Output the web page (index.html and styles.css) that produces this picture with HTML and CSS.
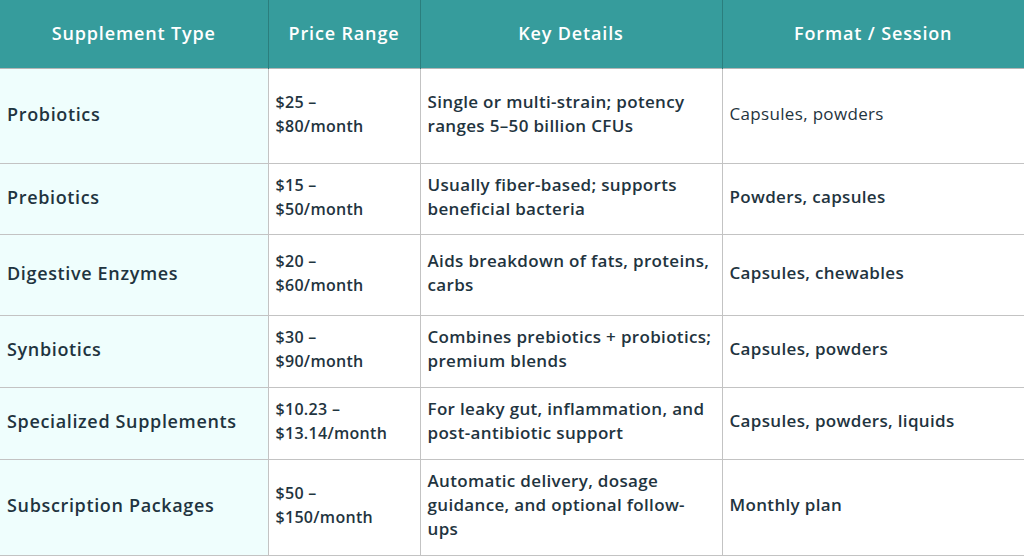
FILE: index.html
```html
<!DOCTYPE html>
<html>
<head>
<meta charset="utf-8">
<link rel="stylesheet" href="styles.css">
</head>
<body>
<table class="grid">
  <colgroup>
    <col class="c1"><col class="c2"><col class="c3"><col class="c4">
  </colgroup>
  <thead>
    <tr class="head">
      <th>Supplement Type</th>
      <th>Price Range</th>
      <th>Key Details</th>
      <th>Format / Session</th>
    </tr>
  </thead>
  <tbody>
    <tr class="r1">
      <td class="type">Probiotics</td>
      <td class="price">$25 –<br>$80/month</td>
      <td class="detail">Single or multi-strain; potency ranges 5–50 billion CFUs</td>
      <td class="detail light">Capsules, powders</td>
    </tr>
    <tr class="r2">
      <td class="type">Prebiotics</td>
      <td class="price">$15 –<br>$50/month</td>
      <td class="detail">Usually fiber-based; supports beneficial bacteria</td>
      <td class="detail">Powders, capsules</td>
    </tr>
    <tr class="r3">
      <td class="type">Digestive Enzymes</td>
      <td class="price">$20 –<br>$60/month</td>
      <td class="detail">Aids breakdown of fats, proteins, carbs</td>
      <td class="detail">Capsules, chewables</td>
    </tr>
    <tr class="r4">
      <td class="type">Synbiotics</td>
      <td class="price">$30 –<br>$90/month</td>
      <td class="detail">Combines prebiotics + probiotics; premium blends</td>
      <td class="detail">Capsules, powders</td>
    </tr>
    <tr class="r5">
      <td class="type">Specialized Supplements</td>
      <td class="price">$10.23 –<br>$13.14/month</td>
      <td class="detail">For leaky gut, inflammation, and post-antibiotic support</td>
      <td class="detail">Capsules, powders, liquids</td>
    </tr>
    <tr class="r6">
      <td class="type">Subscription Packages</td>
      <td class="price">$50 –<br>$150/month</td>
      <td class="detail">Automatic delivery, dosage guidance, and optional follow-ups</td>
      <td class="detail">Monthly plan</td>
    </tr>
  </tbody>
</table>
</body>
</html>
```
FILE: styles.css
```css
html, body {
  margin: 0;
  padding: 0;
  background: #ffffff;
}
body {
  font-family: "Open Sans", "Liberation Sans", sans-serif;
  color: #1f3440;
}
.grid {
  width: 1024px;
  border-collapse: collapse;
  table-layout: fixed;
}
.c1 { width: 268px; }
.c2 { width: 152px; }
.c3 { width: 302px; }
.c4 { width: 302px; }
.head {
  height: 68px;
  background: #369c9c;
}
.head th {
  color: #ffffff;
  font-size: 18px;
  font-weight: 600;
  letter-spacing: 0.85px;
  text-align: center;
  vertical-align: middle;
  border-right: 1px solid #2b7e7d;
  padding: 0 4px 1px;
}
.head th:last-child { border-right: none; }
td {
  font-size: 16px;
  font-weight: 600;
  line-height: 24px;
  padding: 0 7px 4px;
  vertical-align: middle;
  border: 1px solid #c3c3c3;
  border-top-color: #b5b5b5;
}
td:first-child { border-left: none; }
td:last-child { border-right: none; }
td.type {
  background: #effefd;
  font-size: 18px;
  letter-spacing: 0.65px;
}
td.price {
  font-size: 16px;
  letter-spacing: 0.3px;
}
td.detail {
  font-size: 17px;
  letter-spacing: 0.33px;
}
td.light { font-weight: 400; }
.r1 { height: 95px; }
.r2 { height: 71px; }
.r3 { height: 81px; }
.r4 { height: 72px; }
.r5 { height: 72px; }
.r6 { height: 96px; }
```
